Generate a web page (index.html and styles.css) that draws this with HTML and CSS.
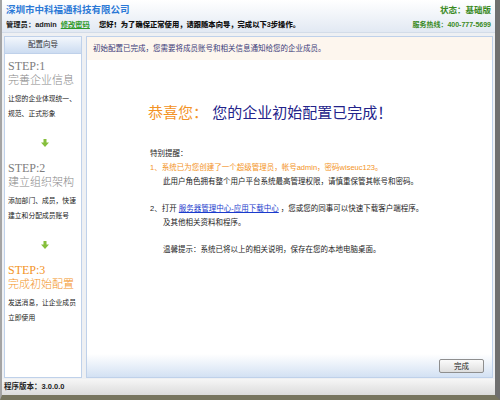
FILE: index.html
```html
<!DOCTYPE html>
<html lang="zh-CN">
<head>
    <meta charset="UTF-8">
    <title>配置向导</title>
    <link rel="stylesheet" href="styles.css">
</head>
<body>
<div class="window">
    <header class="topbar">
        <div class="topbar-left">
            <h1 class="company">深圳市中科福通科技有限公司</h1>
            <p class="welcome">
                管理员&#xFF1A;admin
                <a class="edit-pass" href="#">修改密码</a>
                <b>您好&#xFF01;为了确保正常使用&#xFF0C;请跟随本向导&#xFF0C;完成以下3步操作&#x3002;</b>
            </p>
        </div>
        <div class="topbar-right">
            <p class="status">状态&#xFF1A;基础版</p>
            <p class="hotline">服务热线&#xFF1A;400-777-5699</p>
        </div>
    </header>

    <div class="body">
        <aside class="wizard">
            <div class="wizard-title">配置向导</div>

            <div class="step">
                <div class="step-no">STEP:1</div>
                <div class="step-name">完善企业信息</div>
                <p class="step-desc">让您的企业体现统一&#x3001;规范&#x3001;正式形象</p>
            </div>
            <div class="arrow">
                <svg width="8" height="8" viewBox="0 0 8 8"><path d="M2.5 0h3v3.5H8L4 8 0 3.5h2.5z" fill="#86bf3c"/></svg>
            </div>
            <div class="step">
                <div class="step-no">STEP:2</div>
                <div class="step-name">建立组织架构</div>
                <p class="step-desc">添加部门&#x3001;成员&#xFF0C;快速建立和分配成员账号</p>
            </div>
            <div class="arrow">
                <svg width="8" height="8" viewBox="0 0 8 8"><path d="M2.5 0h3v3.5H8L4 8 0 3.5h2.5z" fill="#86bf3c"/></svg>
            </div>
            <div class="step current">
                <div class="step-no">STEP:3</div>
                <div class="step-name">完成初始配置</div>
                <p class="step-desc">发送消息&#xFF0C;让企业成员立即使用</p>
            </div>
        </aside>

        <main class="panel">
            <div class="notice">初始配置已完成&#xFF0C;您需要将成员账号和相关信息通知给您的企业成员&#x3002;</div>

            <div class="content">
                <h2 class="done"><span class="orange">恭喜您&#xFF1A;</span> 您的企业初始配置已完成&#xFF01;</h2>

                <p class="tips-title">特别提醒&#xFF1A;</p>
                <p class="orange">1&#x3001;系统已为您创建了一个超级管理员&#xFF0C;帐号admin&#xFF0C;密码wiseuc123&#x3002;</p>
                <p class="indent">此用户角色拥有整个用户平台系统最高管理权限&#xFF0C;请慎重保管其帐号和密码&#x3002;</p>

                <p class="group">2&#x3001;打开 <a href="#">服务器管理中心-应用下载中心</a> &#xFF0C;您或您的同事可以快速下载客户端程序&#x3002;</p>
                <p class="indent">及其他相关资料和程序&#x3002;</p>

                <p class="indent group">温馨提示&#xFF1A;系统已将以上的相关说明&#xFF0C;保存在您的本地电脑桌面&#x3002;</p>
            </div>

            <div class="panel-foot">
                <button class="btn">完成</button>
            </div>
        </main>
    </div>

    <footer class="statusbar">程序版本&#xFF1A;3.0.0.0</footer>
</div>
</body>
</html>
```

FILE: styles.css
```css
html, body {
    margin: 0;
    padding: 0;
    width: 500px;
    height: 400px;
    overflow: hidden;

    font-family: "Liberation Sans", "Noto Sans CJK SC", sans-serif;
    font-size: 7.5px;
    color: #222;
    text-spacing-trim: space-all;
}

p, h1, h2 {
    margin: 0;
}

.window {
    box-sizing: border-box;
    width: 500px;
    height: 400px;
    display: flex;
    flex-direction: column;
    background: #eef0f3;
    border-left: 2px solid #a4a4a4;
    border-right: 5px solid #6f6f6f;
    border-bottom: 5px solid #77755f;
}

/* top bar */
.topbar {
    height: 33px;
    flex: none;
    display: flex;
    justify-content: space-between;
    padding: 0 4px 0 4px;
    background: linear-gradient(#ffffff, #e2e9f3);
    border-bottom: 1px solid #d3dce8;
    box-sizing: border-box;
}

.company {
    margin-top: 3px;
    font-size: 9.5px;
    line-height: 14px;
    color: #2a78d6;
}

.welcome {
    margin-top: 2px;
    font-size: 7.3px;
    line-height: 12px;
    font-weight: bold;
    white-space: nowrap;
}

.edit-pass {
    margin: 0 7px 0 2px;
    color: #2f9a2a;
    text-decoration: underline;
}

.welcome b {
    color: #111;
}

.topbar-right {
    text-align: right;
    color: #3a8a1e;
    font-weight: bold;
}

.status {
    margin-top: 3px;
    font-size: 8.5px;
    line-height: 14px;
}

.hotline {
    margin-top: 2px;
    font-size: 7px;
    line-height: 12px;
}

/* body */
.body {
    flex: 1;
    display: flex;
    gap: 4px;
    padding: 3px 2px 1px 2px;
    min-height: 0;
}

.wizard {
    width: 78px;
    flex: none;
    box-sizing: border-box;
    background: #fff;
    border: 1px solid #bfd1ea;
    padding: 0 0 0 3px;
}

.wizard-title {
    height: 16px;
    line-height: 16px;
    margin-left: -3px;
    text-align: center;
    color: #333;
    background: linear-gradient(#f3f7fc, #ccdcf1);
    border-bottom: 1px solid #bfd1ea;
}

.step {
    padding-top: 5px;
}

.step-no {
    font-family: "Liberation Serif", "Noto Sans CJK SC", serif;
    font-size: 12px;
    line-height: 14px;
    color: #7d7d7d;
}

.step-name {
    font-size: 11px;
    line-height: 14px;
    color: #888;
    font-weight: 300;
    white-space: nowrap;
}

.step-desc {
    margin-top: 4px;
    font-size: 6.8px;
    line-height: 15px;
    color: #222;
}

.current .step-no,
.current .step-name {
    color: #f39325;
}

.arrow {
    margin: 18px 0 9px 0;
    padding-left: 33px;
    height: 8px;
    line-height: 0;
}

/* right panel */
.panel {
    flex: 1;
    display: flex;
    flex-direction: column;
    background: #fff;
    border: 1px solid #bfd1ea;
}

.notice {
    height: 23px;
    line-height: 23px;
    padding-left: 6px;
    background: #fdf6ee;
    color: #3a3a78;
    flex: none;
}

.content {
    flex: 1;
    padding: 43px 0 0 63px;
    line-height: 14px;
}

.done {
    margin-left: -2px;
    margin-bottom: 24px;
    font-size: 15px;
    line-height: 20px;
    font-weight: normal;
    color: #23238a;
}

.orange {
    color: #f39325;
}

.indent {
    padding-left: 13px;
}

.group {
    margin-top: 13px;
}

.content a {
    color: #1a3bcc;
    text-decoration: underline;
}

.panel-foot {
    height: 23px;
    flex: none;
    display: flex;
    justify-content: flex-end;
    align-items: center;
    padding-right: 8px;
    background: linear-gradient(#ffffff, #d3e1f3);
}

.btn {
    width: 45px;
    height: 14px;
    padding: 0;
    font-family: "Liberation Sans", "Noto Sans CJK SC", sans-serif;
    font-size: 7.5px;
    color: #222;
    background: linear-gradient(#fbfbfb, #dedede);
    border: 1px solid #8e8e8e;
    border-radius: 2px;
}

.statusbar {
    height: 16px;
    line-height: 16px;
    flex: none;
    padding-left: 2px;
    font-weight: bold;
    color: #222;
    background: linear-gradient(#f6f6f6, #dcdcdc);
}
```
